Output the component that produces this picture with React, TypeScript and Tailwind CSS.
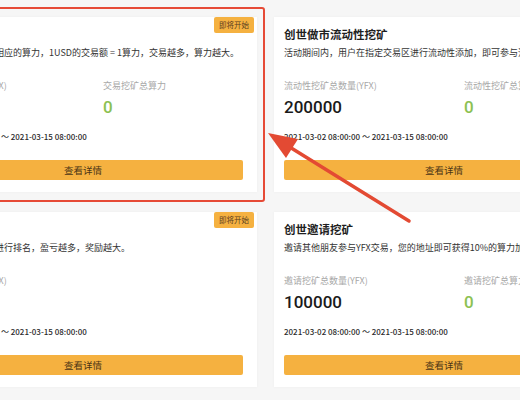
import React from "react";

type Stat = {
  label: string;
  value: string;
};

type Pool = {
  title: string;
  desc: string;
  stats: Stat[];
  highlight?: boolean;
};

const pools: Pool[] = [
  {
    title: "创世交易挖矿",
    desc: "用户交易即可获得相应的算力，1USD的交易额 = 1算力，交易越多，算力越大。",
    stats: [
      { label: "交易挖矿总数量(YFX)", value: "300000" },
      { label: "交易挖矿总算力", value: "0" },
    ],
    highlight: true,
  },
  {
    title: "创世做市流动性挖矿",
    desc: "活动期间内，用户在指定交易区进行流动性添加，即可参与流动性挖矿，获得相应奖励。",
    stats: [
      { label: "流动性挖矿总数量(YFX)", value: "200000" },
      { label: "流动性挖矿总算力", value: "0" },
    ],
  },
  {
    title: "创世交易大赛",
    desc: "活动期间根据盈亏进行排名，盈亏越多，奖励越大。",
    stats: [{ label: "交易大赛总奖励(YFX)", value: "50000" }],
  },
  {
    title: "创世邀请挖矿",
    desc: "邀请其他朋友参与YFX交易，您的地址即可获得10%的算力加成奖励。",
    stats: [
      { label: "邀请挖矿总数量(YFX)", value: "100000" },
      { label: "邀请挖矿总算力", value: "0" },
    ],
  },
];

function PoolCard({ pool }: { pool: Pool }) {
  return (
    <div className="relative">
      {pool.highlight && (
        <div className="absolute -top-[10px] -right-[8px] -bottom-[10px] -left-[10px] rounded-[3px] border-2 border-[#e64a36] pointer-events-none" />
      )}
      <div className="relative flex h-[175px] flex-col bg-white pl-[10px] pr-[14px] pt-[9px] shadow-[0_0_3px_rgba(0,0,0,0.04)]">
        <span className="absolute right-[3px] top-0 rounded-[2px] bg-[#f5b140] px-[5px] text-[7.5px] leading-[16px] text-[#5a4020]">
          即将开始
        </span>
        <h3 className="whitespace-nowrap text-[11.5px] font-bold leading-[16px] text-[#1f1f1f]">{pool.title}</h3>
        <p className="mt-[4px] whitespace-nowrap text-[9px] leading-[13px] text-[#333]">{pool.desc}</p>
        <div className="mt-[20px] grid grid-cols-[180px_1fr]">
          {pool.stats.map((s, i) => (
            <div key={s.label} className="flex flex-col">
              <span className="whitespace-nowrap text-[9px] leading-[13px] text-[#a8a8a8]">{s.label}</span>
              <span
                className={
                  i === 0
                    ? "mt-[4px] font-['Roboto',sans-serif] text-[17px] font-medium leading-[22px] text-[#1a1a1a]"
                    : "mt-[4px] font-['Roboto',sans-serif] text-[17px] font-medium leading-[22px] text-[#8cc152]"
                }
              >
                {s.value}
              </span>
            </div>
          ))}
        </div>
        <p className="mt-[12px] whitespace-nowrap text-[8px] font-medium leading-[13px] text-[#2a2a2a]">
          2021-03-02 08:00:00 ～ 2021-03-15 08:00:00
        </p>
        <button className="mt-[17px] h-[20px] w-full rounded-[2px] bg-[#f5b140] text-[9.5px] text-[#4a3415]">
          查看详情
        </button>
      </div>
    </div>
  );
}

export default function App() {
  return (
    <div className="relative h-[400px] w-[520px] overflow-hidden bg-[#f6f6f6] font-['Noto_Sans_CJK_SC',sans-serif]">
      <div className="ml-[-87px] grid grid-cols-[344px_344px] gap-x-[17px] gap-y-[20px] pt-[17px]">
        {pools.map((p) => (
          <PoolCard key={p.title} pool={p} />
        ))}
      </div>
      {/* annotation arrow */}
      <svg className="pointer-events-none absolute inset-0" width="520" height="400" viewBox="0 0 520 400">
        <line x1="409" y1="221" x2="288" y2="146" stroke="#e34a33" strokeWidth="3.5" strokeLinecap="round" />
        <polygon points="268,133 298,139 286,158" fill="#e34a33" />
      </svg>
    </div>
  );
}
